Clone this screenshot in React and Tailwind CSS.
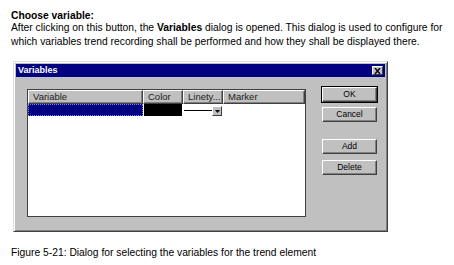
import React from "react";

function Btn({ children, isDefault }) {
  return (
    <div className={isDefault ? "border border-black" : "border border-transparent"}>
      <div className="h-[15px] flex items-center justify-center bg-[#c0c0c0] border-t border-l border-white border-b border-r border-b-[#404040] border-r-[#404040] shadow-[inset_-1px_-1px_0_#808080] text-[8.5px] text-black">
        {children}
      </div>
    </div>
  );
}

function HeaderCell({ children, w }) {
  return (
    <div
      className={`${w} h-[14px] shrink-0 flex items-center pl-[4px] bg-[#c0c0c0] border-t border-l border-white border-b border-r border-b-[#404040] border-r-[#404040] shadow-[inset_-1px_-1px_0_#808080] text-[9.5px] text-[#202020] overflow-hidden whitespace-nowrap`}
    >
      {children}
    </div>
  );
}

export default function App() {
  return (
    <div className="w-[454px] h-[265px] bg-white overflow-hidden font-['Liberation_Sans',Arial,sans-serif] text-black">
      <div className="pl-[11px] pt-[10px]">
        <div className="text-[10.3px] leading-[11px] font-bold">Choose variable:</div>
        <div className="text-[10.3px] leading-[14px] whitespace-nowrap">
          After clicking on this button, the <span className="font-bold">Variables</span> dialog is opened. This dialog is used to configure for
          <br />
          which variables trend recording shall be performed and how they shall be displayed there.
        </div>
      </div>

      <div className="ml-[13px] mt-[12px] w-[375px] h-[171px] bg-[#c0c0c0] border-t border-l border-[#dfdfdf] border-b border-r border-b-[#404040] border-r-[#404040] shadow-[inset_1px_1px_0_#ffffff,inset_-1px_-1px_0_#808080] p-[2px] flex flex-col">
        <div className="h-[13px] bg-[#000080] flex items-center justify-between pl-[2px] pr-[2px]">
          <span className="text-white font-bold text-[9px] leading-none">Variables</span>
          <div className="w-[11px] h-[9px] bg-[#c0c0c0] border-t border-l border-white border-b border-r border-b-[#404040] border-r-[#404040] flex items-center justify-center">
            <svg width="7" height="6" viewBox="0 0 7 6">
              <path d="M1 0 L6 6 M6 0 L1 6" stroke="black" strokeWidth="1.4" />
            </svg>
          </div>
        </div>

        <div className="flex flex-1 pl-[11px] pr-[7px]">
          <div className="mt-[12px] w-[279px] h-[128px] bg-white border border-[#404040] flex flex-col">
            <div className="flex">
              <HeaderCell w="w-[115px]">Variable</HeaderCell>
              <HeaderCell w="w-[40px]">Color</HeaderCell>
              <HeaderCell w="w-[40px]">Linety...</HeaderCell>
              <HeaderCell w="w-[82px]">Marker</HeaderCell>
            </div>
            <div className="flex h-[12px]">
              <div className="w-[115px] h-[12px] bg-[#000080] border border-dotted border-[#8080ff]" />
              <div className="w-[38px] h-[12px] ml-[1px] mr-[1px] bg-black" />
              <div className="w-[39px] h-[12px] flex items-center">
                <div className="w-[28px] h-[1px] bg-black ml-[1px]" />
                <div className="ml-auto mt-[2px] w-[10px] h-[10px] bg-[#c0c0c0] border-t border-l border-white border-b border-r border-b-[#404040] border-r-[#404040] flex items-center justify-center">
                  <svg width="5" height="3" viewBox="0 0 5 3">
                    <path d="M0 0 L5 0 L2.5 3 Z" fill="black" />
                  </svg>
                </div>
              </div>
            </div>
          </div>

          <div className="ml-auto mt-[9px] w-[57px] flex flex-col">
            <Btn isDefault>OK</Btn>
            <div className="mt-[3px]">
              <Btn>Cancel</Btn>
            </div>
            <div className="mt-[15px]">
              <Btn>Add</Btn>
            </div>
            <div className="mt-[4px]">
              <Btn>Delete</Btn>
            </div>
          </div>
        </div>
      </div>

      <div className="pl-[11px] mt-[14px] text-[10.3px] leading-[14px]">
        Figure 5-21: Dialog for selecting the variables for the trend element
      </div>
    </div>
  );
}
